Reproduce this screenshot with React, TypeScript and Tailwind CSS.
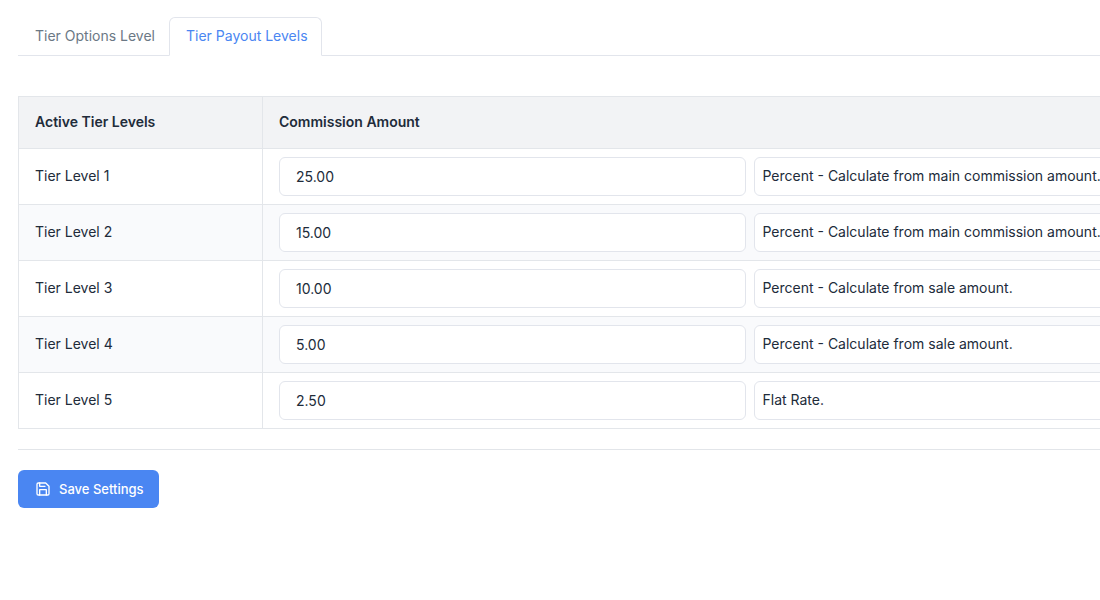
import React, { useState } from 'react';

type PayoutType = 'main' | 'sale' | 'flat';

interface TierLevel {
  id: number;
  amount: string;
  type: PayoutType;
}

const PAYOUT_TYPES: { value: PayoutType; label: string }[] = [
  { value: 'main', label: 'Percent - Calculate from main commission amount.' },
  { value: 'sale', label: 'Percent - Calculate from sale amount.' },
  { value: 'flat', label: 'Flat Rate.' },
];

const INITIAL_LEVELS: TierLevel[] = [
  { id: 1, amount: '25.00', type: 'main' },
  { id: 2, amount: '15.00', type: 'main' },
  { id: 3, amount: '10.00', type: 'sale' },
  { id: 4, amount: '5.00', type: 'sale' },
  { id: 5, amount: '2.50', type: 'flat' },
];

const SaveIcon = () => (
  <svg
    className="h-4 w-4"
    viewBox="0 0 24 24"
    fill="none"
    stroke="currentColor"
    strokeWidth="2"
    strokeLinecap="round"
    strokeLinejoin="round"
    aria-hidden="true"
  >
    <path d="M19 21H5a2 2 0 0 1-2-2V5a2 2 0 0 1 2-2h11l5 5v11a2 2 0 0 1-2 2z" />
    <polyline points="17 21 17 13 7 13 7 21" />
    <polyline points="7 3 7 8 15 8" />
  </svg>
);

const Tabs: React.FC = () => (
  <nav className="flex border-b border-[#e2e5ec]">
    <a href="#options" className="border border-transparent py-2 pr-[13px] pl-4 text-[#6b7885]">
      Tier Options Level
    </a>
    <a
      href="#payouts"
      aria-current="page"
      className="-mb-px rounded-t-md border border-[#e2e5ec] border-b-white bg-white py-2 pr-[13px] pl-4 text-[#4a86f2]"
    >
      Tier Payout Levels
    </a>
  </nav>
);

interface TierRowProps {
  level: TierLevel;
  onChange: (level: TierLevel) => void;
}

const TierRow: React.FC<TierRowProps> = ({ level, onChange }) => (
  <tr className="even:bg-[#f9fafc]">
    <td className="border border-[#e3e6ea] px-4 pb-0.5">
      <label htmlFor={`amount-${level.id}`}>Tier Level {level.id}</label>
    </td>
    <td className="border border-[#e3e6ea] px-4 py-2">
      <div className="grid grid-cols-2 gap-2">
        <input
          id={`amount-${level.id}`}
          type="text"
          value={level.amount}
          onChange={(e) => onChange({ ...level, amount: e.target.value })}
          className="h-[39px] rounded-md border border-[#e2e5ec] bg-white px-4 outline-none focus:border-[#4a86f2]"
        />
        <select
          aria-label={`Tier Level ${level.id} commission type`}
          value={level.type}
          onChange={(e) => onChange({ ...level, type: e.target.value as PayoutType })}
          className="h-[39px] appearance-none rounded-md border border-[#e2e5ec] bg-white px-2 pb-0.5 outline-none focus:border-[#4a86f2]"
        >
          {PAYOUT_TYPES.map((type) => (
            <option key={type.value} value={type.value}>
              {type.label}
            </option>
          ))}
        </select>
      </div>
    </td>
  </tr>
);

const App: React.FC = () => {
  const [levels, setLevels] = useState<TierLevel[]>(INITIAL_LEVELS);

  const updateLevel = (next: TierLevel) => {
    setLevels(levels.map((level) => (level.id === next.id ? next : level)));
  };

  return (
    <main className="overflow-hidden bg-white pt-[17px] pb-8 pl-[18px] font-['Inter',sans-serif] text-sm text-[#212b3a]">
      <Tabs />

      <form onSubmit={(e) => e.preventDefault()} className="mt-10">
        <table className="w-full min-w-[1219px] table-fixed border-collapse">
          <thead>
            <tr className="bg-[#f2f3f5] text-left">
              <th className="h-[52px] w-[244px] border border-[#e3e6ea] px-4 pb-0.5 font-semibold">
                Active Tier Levels
              </th>
              <th className="border border-[#e3e6ea] px-4 pb-0.5 font-semibold">Commission Amount</th>
            </tr>
          </thead>
          <tbody>
            {levels.map((level) => (
              <TierRow key={level.id} level={level} onChange={updateLevel} />
            ))}
          </tbody>
        </table>

        <hr className="my-5 border-[#e2e5e9]" />

        <button
          type="submit"
          className="flex h-[38px] items-center gap-2 rounded-md bg-[#4a86f2] pr-[15px] pl-[17px] text-[13px] font-medium text-white"
        >
          <SaveIcon />
          Save Settings
        </button>
      </form>
    </main>
  );
};

export default App;
